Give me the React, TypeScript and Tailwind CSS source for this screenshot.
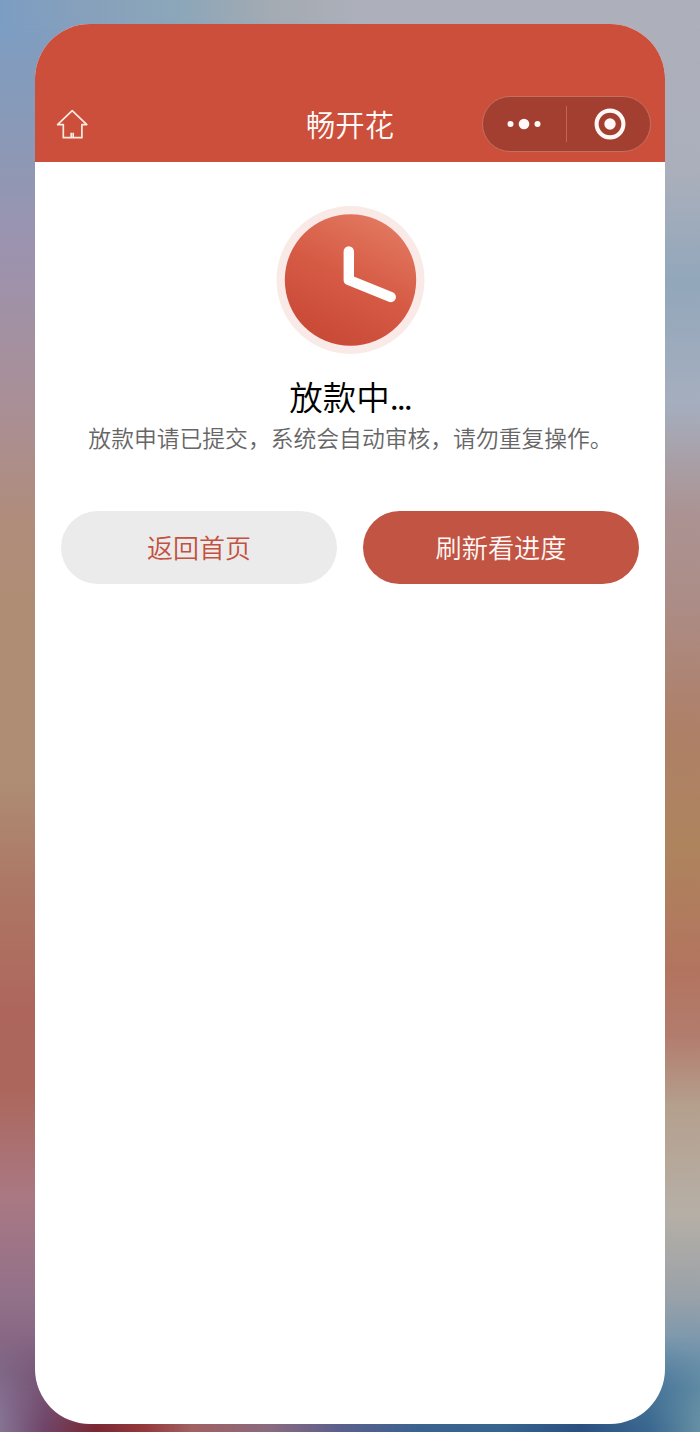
function HomeIcon() {
    return (
        <svg className="w-8 h-8" viewBox="0 0 32 32" fill="none" stroke="#fdeae0" strokeWidth="1.7" strokeLinejoin="round">
            <path d="M16.2 2.6 L1.6 16.6 H7.3 V29.7 H25.9 V16.6 H30.8 Z" />
            <path d="M15.2 29.5 V24.8 M17.2 29.5 V24.8" />
        </svg>
    );
}

function MoreIcon() {
    return (
        <svg className="w-[34px] h-3" viewBox="0 0 34 12" fill="#fff8f6">
            <circle cx="3.5" cy="6" r="3" />
            <circle cx="17" cy="6" r="5.3" />
            <circle cx="30.5" cy="6" r="3" />
        </svg>
    );
}

function TargetIcon() {
    return (
        <svg className="w-8 h-8" viewBox="0 0 32 32">
            <circle cx="16" cy="16" r="13.4" fill="none" stroke="#fff8f6" strokeWidth="4.1" />
            <circle cx="16" cy="16" r="5.7" fill="#fff8f6" />
        </svg>
    );
}

function ClockIcon() {
    return (
        <svg className="w-[150px] h-[150px]" viewBox="0 0 150 150">
            <defs>
                <linearGradient id="clockFace" x1="0.75" y1="0.05" x2="0.3" y2="0.95">
                    <stop offset="0" stopColor="#e2775f" />
                    <stop offset="0.5" stopColor="#d65b45" />
                    <stop offset="1" stopColor="#c94a37" />
                </linearGradient>
            </defs>
            <circle cx="75.5" cy="75" r="74" fill="#f9eae8" />
            <circle cx="75.5" cy="75" r="65.7" fill="url(#clockFace)" />
            <path
                d="M73.8 46.5 V75 L115.7 92"
                fill="none"
                stroke="#fff"
                strokeWidth="10.4"
                strokeLinecap="round"
                strokeLinejoin="round"
            />
        </svg>
    );
}

function Header() {
    return (
        <header className="h-[138px] shrink-0 bg-[#cb4f3b] pt-[72px] pl-[21px] pr-3.5">
            <div className="grid h-14 grid-cols-[169px_1fr_169px] items-center">
                <button aria-label="首页" className="w-8">
                    <HomeIcon />
                </button>
                <h1 className="pr-[7px] text-center text-[29.3px] font-[350] leading-none text-[#fffaf8]">畅开花</h1>
                <div className="flex h-14 items-center rounded-full border border-[#c5705f] bg-[#a33f30]">
                    <button className="flex w-[83px] justify-center pr-0.5">
                        <MoreIcon />
                    </button>
                    <span className="h-9 w-px bg-[#bf6656]" />
                    <button className="flex flex-1 justify-center pl-[3px]">
                        <TargetIcon />
                    </button>
                </div>
            </div>
        </header>
    );
}

export default function App() {
    return (
        <div className="relative isolate h-[1432px] w-[700px] overflow-hidden px-[35px] py-6 font-['Noto_Sans_CJK_SC',sans-serif] font-[350]">
            {/* Blurred wallpaper */}
            <div className="absolute inset-0 -z-10 flex">
                <div className="flex-1 bg-[linear-gradient(180deg,#7c9dc3_0px,#829cbe_60px,#8f98b4_170px,#9c93b0_245px,#a98f96_403px,#b08c7b_524px,#ae8d74_605px,#ae8d74_780px,#ad7765_889px,#ae665c_1010px,#ac675c_1091px,#a97883_1197px,#93718a_1294px,#7d607f_1375px,#846c8d_1432px)]" />
                <div className="flex-1 bg-[linear-gradient(180deg,#adb0bb_0px,#abafbb_170px,#92a7bb_281px,#a5aebe_403px,#ab9494_508px,#ac8c86_605px,#ae8068_727px,#ae845d_848px,#b3745f_970px,#b27c6d_1035px,#b5a08e_1108px,#b6afa6_1213px,#9ba2a9_1294px,#7696ae_1350px,#5682a3_1390px,#6690a4_1432px)]" />
            </div>
            <div className="absolute inset-x-0 top-0 -z-10 h-16 bg-[linear-gradient(90deg,#7c9dc3_0px,#86a0bc_80px,#8ca6b9_180px,#a5abb2_280px,#adb0bb_370px,#adb0bb_700px)] mask-b-from-30%" />
            <div className="absolute inset-x-0 bottom-0 -z-10 h-24 bg-[linear-gradient(90deg,#857394_0px,#6f4568_45px,#7a2733_95px,#95393a_145px,#a0605f_190px,#8a6a80_270px,#5a5f8c_340px,#3a628f_420px,#36648f_500px,#2a4f80_580px,#3a6890_650px,#6690a4_700px)] mask-t-from-5%" />

            <div className="flex h-[1400px] flex-col overflow-hidden rounded-[55px] bg-white">
                <Header />

                <main className="flex flex-col items-center px-[26px] pt-[43px]">
                    <ClockIcon />
                    <h2 className="mt-4 text-[33.5px] leading-[50px] text-black">
                        放款中<span className="tracking-[-2px]">...</span>
                    </h2>
                    <p className="whitespace-nowrap pl-px text-[22.8px] leading-[34px] text-[#666]">
                        放款申请已提交，系统会自动审核，请勿重复操作。
                    </p>
                    <div className="mt-14 flex w-full gap-[26px]">
                        <button className="h-[73px] flex-1 rounded-full bg-[#ebebeb] pb-0.5 text-[26px] text-[#c3513f]">
                            返回首页
                        </button>
                        <button className="h-[73px] flex-1 rounded-full bg-[#c15443] text-[26.2px] text-[#fff8f6]">
                            刷新看进度
                        </button>
                    </div>
                </main>
            </div>
        </div>
    );
}
